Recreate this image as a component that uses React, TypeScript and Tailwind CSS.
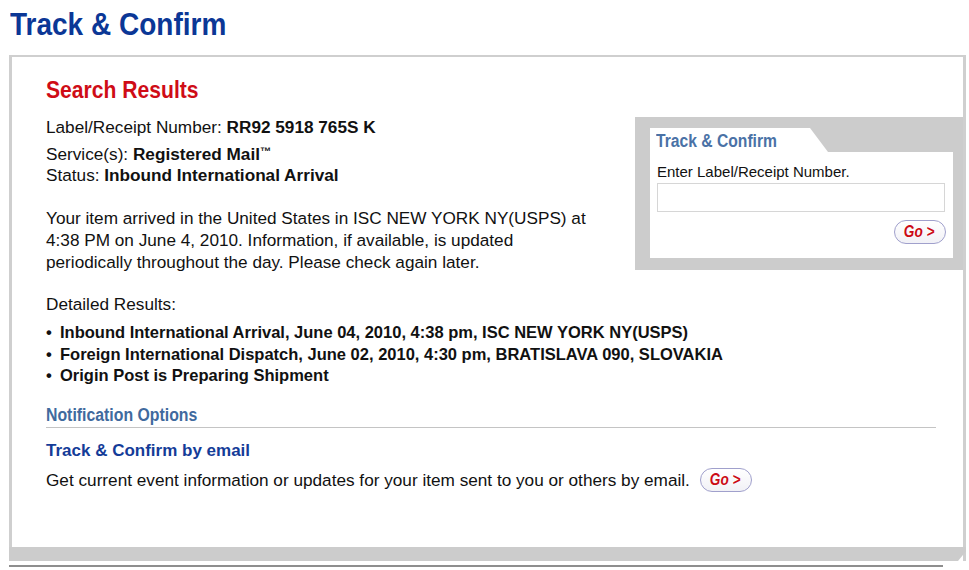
import React from "react";

// Helvetica Condensed look: Liberation Sans bold squeezed horizontally
function Cond({ children, className = "" }: { children: React.ReactNode; className?: string }) {
  return (
    <span className={`inline-block origin-left scale-x-[0.87] whitespace-nowrap font-bold ${className}`}>
      {children}
    </span>
  );
}

function GoButton() {
  return (
    <button className="flex h-[24px] w-[52px] items-center justify-center rounded-full border border-[#a0a0cc] bg-gradient-to-b from-white to-[#f1f1f6] text-[16px] font-bold italic leading-none text-[#cc0a14]">
      <span className="inline-block scale-x-[0.85] pr-[2px]">Go &gt;</span>
    </button>
  );
}

export default function App() {
  const events = [
    "Inbound International Arrival, June 04, 2010, 4:38 pm, ISC NEW YORK NY(USPS)",
    "Foreign International Dispatch, June 02, 2010, 4:30 pm, BRATISLAVA 090, SLOVAKIA",
    "Origin Post is Preparing Shipment",
  ];

  return (
    <div className="relative h-[570px] w-[969px] overflow-hidden bg-white font-['Liberation_Sans',Arial,sans-serif] text-[17.2px] text-[#111]">
      {/* Page title */}
      <h1 className="pl-[10px] pt-[4px] text-[32px] leading-[40px] text-[#0b3796]">
        <Cond className="scale-x-[0.875]">Track &amp; Confirm</Cond>
      </h1>

      {/* Results box */}
      <div className="ml-[9px] mt-[11px] w-[957px] border-x-[3px] border-t-2 border-[#cfcfcf]">
        <div className="h-[490px] pl-[34px] pt-[17px]">
          {/* Side panel: quick track */}
          <div className="float-right mt-[43px] w-[328px] bg-[#cccccc] pb-[12px] pl-[15px] pr-[10px] pt-[11px]">
            <div className="h-[24px] w-[178px] bg-white pl-[6px] pt-[1px] [clip-path:polygon(0_0,160px_0,178px_100%,0_100%)]">
              <Cond className="text-[18px] leading-[22px] text-[#4a72a6]">Track &amp; Confirm</Cond>
            </div>
            <div className="h-[106px] bg-white px-[7px] pt-[12px]">
              <div className="text-[15px] leading-[16px]">Enter Label/Receipt Number.</div>
              <input className="mt-[3px] h-[29px] w-[288px] border border-[#d6d6d6] outline-none" />
              <div className="mt-[8px] flex justify-end">
                <GoButton />
              </div>
            </div>
          </div>

          <h2 className="text-[24px] leading-[32px] text-[#cf0c16]">
            <Cond className="scale-x-[0.88]">Search Results</Cond>
          </h2>

          <div className="mt-[11px] leading-[21px]">
            Label/Receipt Number: <b>RR92 5918 765S K</b>
          </div>
          <div className="mt-[6px] leading-[21px]">
            Service(s): <b>Registered Mail</b>
            <sup className="text-[11px] font-bold">™</sup>
          </div>
          <div className="leading-[21px]">
            Status: <b>Inbound International Arrival</b>
          </div>

          <p className="mt-[21px] w-[545px] leading-[22px]">
            Your item arrived in the United States in ISC NEW YORK NY(USPS) at 4:38 PM on June 4, 2010.
            Information, if available, is updated periodically throughout the day. Please check again later.
          </p>

          <div className="mt-[21px] leading-[21px]">Detailed Results:</div>
          <ul className="mt-[7px] text-[16.5px] font-bold">
            {events.map((e) => (
              <li key={e} className="flex leading-[21.5px]">
                <span className="w-[14px]">•</span>
                <span>{e}</span>
              </li>
            ))}
          </ul>

          {/* Notification options */}
          <div className="clear-both mr-[27px] mt-[16px] border-b border-[#c4c4c4]">
            <h3 className="text-[18px] leading-[24px] text-[#3f6a9e]">
              <Cond className="scale-x-[0.88]">Notification Options</Cond>
            </h3>
          </div>
          <div className="mt-[13px] text-[17px] font-bold leading-[20px] text-[#143c98]">
            Track &amp; Confirm by email
          </div>
          <div className="mt-[7px] flex items-center gap-[10px] leading-[24px]">
            <span>Get current event information or updates for your item sent to you or others by email.</span>
            <GoButton />
          </div>
        </div>

        {/* Bottom band with bevelled corner */}
        <div className="-mx-[3px] h-[14px] bg-[#cccccc] [clip-path:polygon(0_0,100%_0,100%_30%,calc(100%-8px)_100%,0_100%)]" />
      </div>
      <div className="ml-[9px] mt-[4px] h-[2px] w-[934px] bg-[#8e8e8e]" />
    </div>
  );
}
